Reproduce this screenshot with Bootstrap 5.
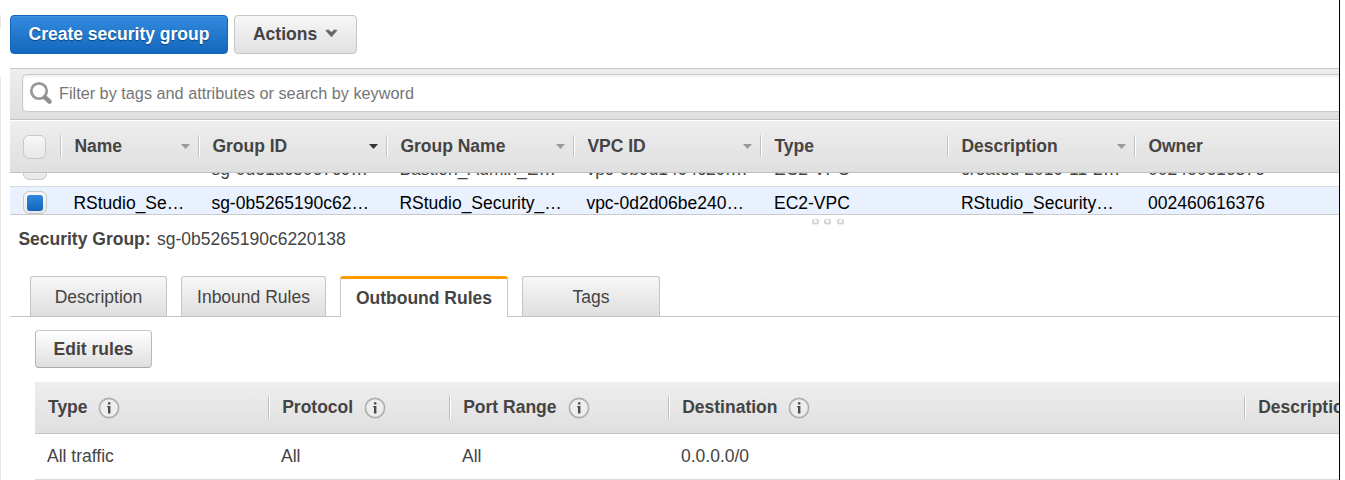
<!DOCTYPE html>
<html lang="en">
<head>
<meta charset="utf-8">
<title>Security Groups</title>
<link href="https://cdn.jsdelivr.net/npm/bootstrap@5.3.0/dist/css/bootstrap.min.css" rel="stylesheet">
<style>
body{font-family:"Liberation Sans",Arial,sans-serif;font-size:17.5px;line-height:22px;color:#444;background:#fff;height:480px;overflow:hidden}
.frame{width:1340px;height:480px;border-right:1px solid #000}
.rail{width:1px;padding-top:15px}
.rail i{background:#e6e6e6;height:14px}
.rail i+i{margin-top:48px;flex:1}
.main{margin-left:9px;min-width:0}
.console-btn{height:39px;border:1px solid #c5c5c5;border-radius:4px;background:linear-gradient(#f7f7f7,#e1e1e1);color:#444;font-size:17.5px;font-weight:700;line-height:22px;padding:0 18px 2px;white-space:nowrap}
.create-btn{width:218px;background:linear-gradient(#328add,#1467be);border-color:#1166bb;color:#fff;text-shadow:0 1px 1px #0a4683;box-shadow:inset 0 1px 0 #4592dc;padding:0 0 2px}
.actions-btn{width:123px;padding-left:18px}
.edit-btn{width:117px;height:38px;padding:0 0 1px;border-color:#c9c9c9 #b8b8b8 #aaa;background:linear-gradient(#fff,#dedede)}
.toolbar{margin-top:14px;height:52px;border-top:1px solid #c9c9c9;border-bottom:1px solid #c5c5c5;background:linear-gradient(#eee,#dfdfdf);padding:5px 0 0 12px}
.search{height:38px;border:1px solid #c9c9c9;border-right:0;border-radius:5px 0 0 5px;background:#fff;box-shadow:inset 0 2px 3px #eee;color:#757575;padding-left:6px;font-size:16.25px}
.sg-grid{display:grid;grid-template-columns:50px 138px 188px 187px 187px 187px 187px 1fr}
.sg-grid>*{white-space:nowrap;min-width:0}
.sg-head{margin-top:1px;height:52px;background:linear-gradient(#eee,#dfdfdf);border-bottom:1px solid #bfc1c3;font-weight:700}
.col-h{border-left:1px solid #c2c2c2;box-shadow:inset 1px 0 0 #fff;height:22px;margin-top:14px;padding:0 8px 0 13.4px}
.arrow{width:9px;height:5px}
.viewport{height:42px;overflow:hidden;border-bottom:1px solid #c8cacc}
.sg-row{height:34px;border-bottom:1px solid #d6d9dd;line-height:32px}
.sg-row:first-child{margin-top:-20px}
.sg-row>*{padding-left:13.400px}
.sg-row>:nth-child(n+6){padding-left:14px}
.sg-row .tick{padding-left:13px;padding-top:4px}
.sg-row.active-row{background:#e9f1fe;color:#000}
.box{width:23px;height:24px;border:1px solid #c9c9c9;border-radius:6px;background:linear-gradient(#f7f7f7,#e8e8e8);display:block}
.tick .box{width:24px;height:23px}
.on .box{padding:3px}
.on .box::after{content:"";display:block;width:16px;height:16px;border-radius:3px;background:linear-gradient(#3186dc,#1264bc)}
.grip{height:10px;padding-top:4px;gap:5.500px;padding-left:802px}
.tabline{margin-top:26px;height:41px;border-bottom:1px solid #c5c5c5;padding-left:20px}
.tab-item{height:40px;border:1px solid #c5c5c5;border-bottom:0;border-radius:3px 3px 0 0;background:linear-gradient(#f7f7f7,#dedede);white-space:nowrap;text-align:center;padding-top:9px}
.tab-item.current{height:41px;background:#fff;border-top:3px solid #f90;font-weight:700;padding-top:8px}
.rules{margin:14px 0 0 25px}
.rule-grid{display:grid;grid-template-columns:233px 181px 219px 576px 1fr;overflow:hidden;white-space:nowrap}
.rule-head{height:52px;border-bottom:1px solid #c5c5c5;background:linear-gradient(#eee,#dfdfdf);font-weight:700;padding-top:14px}
.rule-head>div{height:23px;border-left:1px solid #bebebe;box-shadow:inset 1px 0 0 #fff;padding-left:13.2px}
.rule-head>div:first-child{border:0;box-shadow:none;padding-left:13px}
.rule-row{height:46px;border-bottom:1px solid #dadada;line-height:44px}
.rule-row>div{padding-left:13px}
.rule-row>div:first-child{padding-left:12px}
.info{width:22px;height:22px;flex:none;margin-left:11px;margin-top:.5px}
.rule-head>div:first-child .info{margin-left:10px}
</style>
</head>
<body>
<svg class="d-none"><defs>
<symbol id="i-info" viewBox="0 0 22 22"><circle cx="11" cy="11" r="9.600" fill="#ededed" stroke="#b0b0b0" stroke-width="1.700"/><path d="M10 5.200h2.400v2.200H10zM9.200 9h3.200v7.500H10v-6.300h-.800z" fill="#4a4a4a"/></symbol>
<symbol id="i-arrow" viewBox="0 0 9 5"><path d="M0 0h9L4.500 5z" fill="currentColor"/></symbol>
<symbol id="i-dot" viewBox="0 0 7 6"><rect width="7" height="5.500" rx="2" fill="#d3d3d3"/><circle cx="3.500" cy="2.200" r="1.600" fill="#fff"/></symbol>
</defs></svg>
<div class="frame d-flex overflow-hidden">
<div class="rail d-flex flex-column"><i></i><i></i></div>
<main class="main flex-grow-1">
<div class="d-flex" style="padding-top:15px;gap:6px">
<button class="console-btn create-btn">Create security group</button>
<button class="console-btn actions-btn d-flex align-items-center">Actions<svg width="13" height="9" viewBox="0 0 13 9" style="margin:-1px 0 0 8px"><path d="M.800 1.500 3.200.700 6.500 3.200 9.800.700 12.200 1.500 6.500 8z" fill="#666" stroke="#777" stroke-width=".700" stroke-linejoin="round"/></svg></button>
</div>
<div class="toolbar"><div class="search d-flex align-items-center"><svg width="24" height="24" viewBox="0 0 24 24" class="me-1" style="flex:none"><circle cx="10" cy="10" r="7.700" fill="none" stroke="#999" stroke-width="2.800"/><path d="m16 16.500 4.500 4" stroke="#909090" stroke-width="4.500" stroke-linecap="round"/></svg><span style="margin-left:2px">Filter by tags and attributes or search by keyword</span></div></div>
<div class="sg-grid sg-head">
<div style="padding:14px 0 0 13px"><span class="box"></span></div>
<div class="col-h d-flex align-items-center justify-content-between">Name<svg class="arrow" color="#999"><use href="#i-arrow"/></svg></div>
<div class="col-h d-flex align-items-center justify-content-between">Group ID<svg class="arrow" color="#333"><use href="#i-arrow"/></svg></div>
<div class="col-h d-flex align-items-center justify-content-between">Group Name<svg class="arrow" color="#999"><use href="#i-arrow"/></svg></div>
<div class="col-h d-flex align-items-center justify-content-between">VPC ID<svg class="arrow" color="#999"><use href="#i-arrow"/></svg></div>
<div class="col-h">Type</div>
<div class="col-h d-flex align-items-center justify-content-between">Description<svg class="arrow" color="#999"><use href="#i-arrow"/></svg></div>
<div class="col-h">Owner</div>
</div>
<div class="viewport">
<div class="sg-grid sg-row"><div class="tick"><span class="box"></span></div><div></div><div>sg-0de1dc8067c9…</div><div>Bastion_Admin_E…</div><div>vpc-0b9d1494c29f…</div><div>EC2-VPC</div><div>created 2019-11-2…</div><div>002460616376</div></div>
<div class="sg-grid sg-row active-row"><div class="tick on"><span class="box"></span></div><div>RStudio_Se…</div><div>sg-0b5265190c62…</div><div>RStudio_Security_…</div><div>vpc-0d2d06be240…</div><div>EC2-VPC</div><div>RStudio_Security…</div><div>002460616376</div></div>
</div>
<div class="grip d-flex"><svg width="7" height="6"><use href="#i-dot"/></svg><svg width="7" height="6"><use href="#i-dot"/></svg><svg width="7" height="6"><use href="#i-dot"/></svg></div>
<div style="padding:3px 0 0 8.400px"><b>Security Group:</b> <span style="margin-left:1.500px">sg-0b5265190c6220138</span></div>
<div class="tabline d-flex">
<div class="tab-item" style="width:137px">Description</div>
<div class="tab-item" style="width:145px;margin-left:14px">Inbound Rules</div>
<div class="tab-item current" style="width:168px;margin-left:14px">Outbound Rules</div>
<div class="tab-item" style="width:138px;margin-left:14px">Tags</div>
</div>
<div style="padding:13px 0 0 25px"><button class="console-btn edit-btn">Edit rules</button></div>
<div class="rules">
<div class="rule-grid rule-head">
<div class="d-flex">Type<svg class="info"><use href="#i-info"/></svg></div>
<div class="d-flex">Protocol<svg class="info"><use href="#i-info"/></svg></div>
<div class="d-flex">Port Range<svg class="info"><use href="#i-info"/></svg></div>
<div class="d-flex">Destination<svg class="info"><use href="#i-info"/></svg></div>
<div>Description</div>
</div>
<div class="rule-grid rule-row"><div>All traffic</div><div>All</div><div>All</div><div>0.0.0.0/0</div><div></div></div>
</div>
</main>
</div>
<script src="https://cdn.jsdelivr.net/npm/bootstrap@5.3.0/dist/js/bootstrap.bundle.min.js"></script>
</body>
</html>
